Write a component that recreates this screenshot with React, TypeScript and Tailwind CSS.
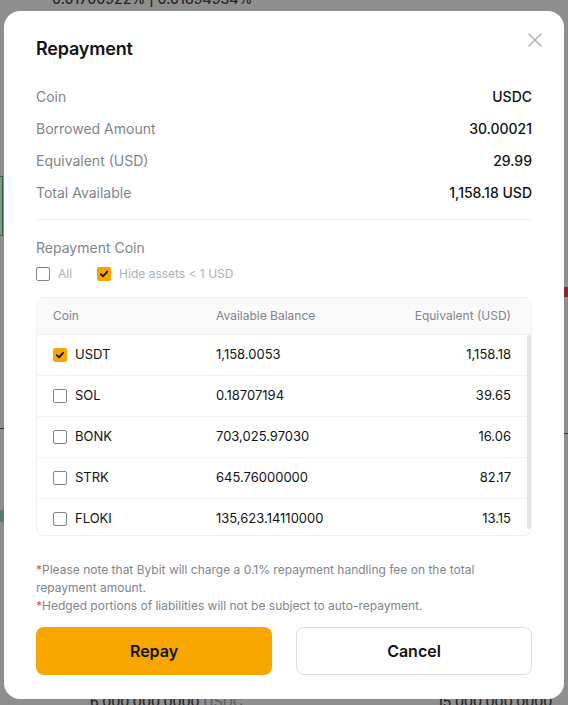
import React from "react";

const rows = [
  { coin: "USDT", bal: "1,158.0053", eq: "1,158.18", checked: true },
  { coin: "SOL", bal: "0.18707194", eq: "39.65", checked: false },
  { coin: "BONK", bal: "703,025.97030", eq: "16.06", checked: false },
  { coin: "STRK", bal: "645.76000000", eq: "82.17", checked: false },
  { coin: "FLOKI", bal: "135,623.14110000", eq: "13.15", checked: false },
];

function Check({ checked }: { checked: boolean }) {
  if (checked) {
    return (
      <span className="flex h-[14px] w-[14px] shrink-0 items-center justify-center rounded-[2px] bg-[#f7a600]">
        <svg width="10" height="10" viewBox="0 0 10 10" fill="none">
          <path d="M1.8 5.2 L4 7.4 L8.3 2.6" stroke="#121214" strokeWidth="1.8" strokeLinecap="round" strokeLinejoin="round" />
        </svg>
      </span>
    );
  }
  return <span className="h-[14px] w-[14px] shrink-0 rounded-[2px] border border-[#81858c] bg-white" />;
}

export default function App() {
  const info = [
    ["Coin", "USDC"],
    ["Borrowed Amount", "30.00021"],
    ["Equivalent (USD)", "29.99"],
    ["Total Available", "1,158.18 USD"],
  ];
  return (
    <div
      className="relative h-[705px] w-[568px] overflow-hidden bg-[#8e8e8e] pt-[11px] pl-[4px]"
      style={{ fontFamily: "Inter, 'Noto Sans', sans-serif" }}
    >
      {/* dimmed page content behind the overlay */}
      <div className="absolute left-[52px] top-[-9px] text-[14px] font-medium leading-[16px] text-[#262626]">
        0.01700922% | 0.01894934%
      </div>
      <div className="absolute left-[90px] top-[694px] text-[14px] font-medium leading-[16px] text-[#262626]">
        6,000,000.0000 <span className="text-[#5e6166]">USDC</span>
      </div>
      <div className="absolute left-[437px] top-[694px] text-[14px] font-medium leading-[16px] text-[#262626]">
        15,000,000.0000 <span className="text-[#5e6166]">USDC</span>
      </div>
      <div className="absolute left-[-2px] top-[176px] h-[60px] w-[5px] border border-[#1b6b3a]" />
      <div className="absolute left-[0px] top-[510px] h-[12px] w-[4px] bg-[#557a66]" />
      <div className="absolute right-[0px] top-[287px] h-[10px] w-[4px] bg-[#8a2a30]" />
      <div className="absolute left-[0px] top-[428px] h-[1px] w-[4px] bg-[#333]" />
      <div className="absolute right-[0px] top-[433px] h-[1px] w-[4px] bg-[#333]" />

      {/* modal */}
      <div className="relative flex h-[688px] w-[560px] flex-col rounded-[16px] bg-white px-[32px] pt-[24px] pb-[24px]">
        <button className="absolute right-[22px] top-[22px] flex h-[14px] w-[14px] items-center justify-center">
          <svg width="14" height="14" viewBox="0 0 14 14" fill="none">
            <path d="M1 1 L13 13 M13 1 L1 13" stroke="#adb1b8" strokeWidth="1.5" strokeLinecap="round" />
          </svg>
        </button>

        <h2 className="pt-[1px] text-[18px] font-semibold leading-[26px] tracking-[-0.2px] text-[#121214]">Repayment</h2>

        <div className="mt-[25px] flex flex-col gap-[12px]">
          {info.map(([k, v]) => (
            <div key={k} className="flex items-center justify-between text-[14px] leading-[20px]">
              <span className="text-[#81858c]">{k}</span>
              <span className="font-medium text-[#121214]">{v}</span>
            </div>
          ))}
        </div>

        <div className="mt-[16px] h-px bg-[#eef0f2]" />

        <div className="mt-[18px] text-[14px] leading-[20px] text-[#81858c]">Repayment Coin</div>

        <div className="mt-[6px] flex items-center text-[12px] leading-[20px] text-[#adb1b8]">
          <label className="flex items-center gap-[8px]">
            <Check checked={false} />
            <span>All</span>
          </label>
          <label className="ml-[25px] flex items-center gap-[8px]">
            <Check checked={true} />
            <span>Hide assets &lt; 1 USD</span>
          </label>
        </div>

        <div className="mt-[13px] overflow-hidden rounded-[8px] border border-[#eef0f2]">
          <div className="grid h-[37px] grid-cols-[163px_1fr_120px] items-center border-b border-[#eef0f2] bg-[#fafafa] pl-[16px] pr-[20px] text-[12px] text-[#81858c]">
            <span>Coin</span>
            <span>Available Balance</span>
            <span className="text-right">Equivalent (USD)</span>
          </div>
          <div className="relative h-[200px] overflow-hidden">
            {rows.map((r) => (
              <div
                key={r.coin}
                className="grid h-[41px] shrink-0 grid-cols-[163px_1fr_120px] items-center border-b border-[#f2f3f5] pl-[16px] pr-[20px] text-[13px] text-[#121214]"
              >
                <span className="flex items-center gap-[8px]">
                  <Check checked={r.checked} />
                  <span>{r.coin}</span>
                </span>
                <span>{r.bal}</span>
                <span className="text-right">{r.eq}</span>
              </div>
            ))}
            <div className="absolute right-0 top-0 h-[194px] w-[4px] rounded-full bg-[#e3e4e6]" />
          </div>
        </div>

        <div className="mt-[25px] text-[12px] leading-[18px] text-[#81858c]">
          <p>
            <span className="text-[#f6465d]">*</span>Please note that Bybit will charge a 0.1% repayment handling fee on the total
            repayment amount.
          </p>
          <p>
            <span className="text-[#f6465d]">*</span>Hedged portions of liabilities will not be subject to auto-repayment.
          </p>
        </div>

        <div className="mt-auto grid grid-cols-2 gap-[24px]">
          <button className="h-[48px] rounded-[8px] bg-[#f7a600] text-[16px] font-semibold text-[#121214]">Repay</button>
          <button className="h-[48px] rounded-[8px] border border-[#dcdee0] bg-white text-[16px] font-semibold text-[#121214]">
            Cancel
          </button>
        </div>
      </div>
    </div>
  );
}
